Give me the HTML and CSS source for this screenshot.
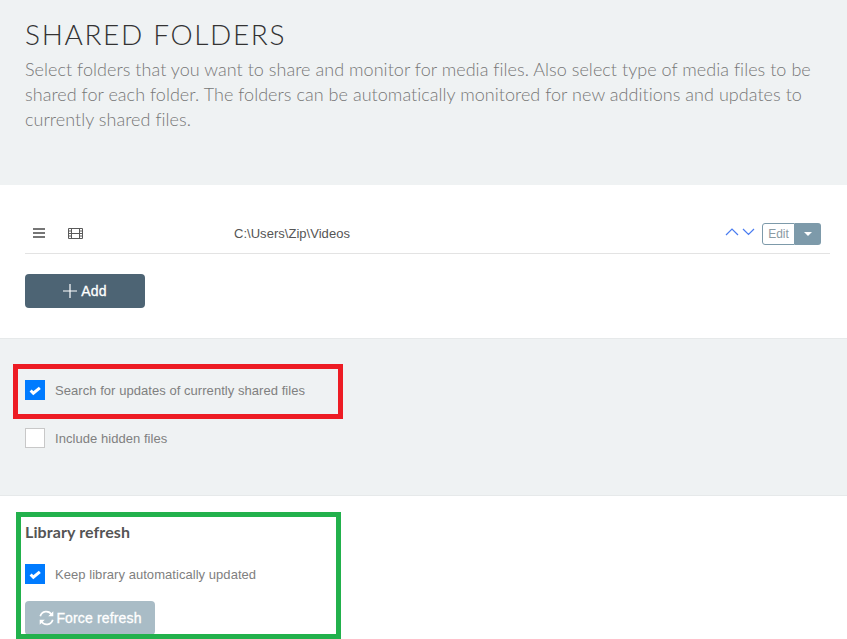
FILE: index.html
```html
<!DOCTYPE html>
<html lang="en">
<head>
<meta charset="utf-8">
<title>Shared folders</title>
<link rel="stylesheet" href="styles.css">
</head>
<body>
<header class="intro">
  <h1>SHARED FOLDERS</h1>
  <p>Select folders that you want to share and monitor for media files. Also select type of media files to be shared for each folder. The folders can be automatically monitored for new additions and updates to currently shared files.</p>
</header>
<section class="folders">
  <div class="row">
    <svg class="ic-menu" width="12" height="10" viewBox="0 0 12 10"><path d="M0 1h12M0 5h12M0 9h12" stroke="#4a4a4a" stroke-width="1.6"/></svg>
    <svg class="ic-film" width="15" height="13" viewBox="0 0 15 13"><path d="M.5 1.500h14v10H.5zM3.500 1.500v10M11.500 1.500v10M3.500 6.500h8M.5 4h3M.5 6.500h3M.5 9h3M11.500 4h3M11.500 6.500h3M11.500 9h3" fill="none" stroke="#5a5a5a"/></svg>
    <span class="path">C:\Users\Zip\Videos</span>
    <svg class="ic-arrows" width="30" height="9" viewBox="0 0 30 9"><path d="M1 8l6-6 6 6M18 2l5.500 5.500L29 2" fill="none" stroke="#4a7cf0" stroke-width="1.200"/></svg>
    <div class="edit-group">
      <span class="edit">Edit</span>
      <span class="caret"><i></i></span>
    </div>
  </div>
  <button class="btn add"><svg width="14" height="14" viewBox="0 0 14 14"><path d="M7 0v14M0 7h14" stroke="#fff" stroke-width="1.200"/></svg>Add</button>
</section>
<section class="options">
  <label class="check"><span class="box on"><svg width="13" height="11" viewBox="0 0 12 10"><path d="M1.500 5l2.500 2.500 6-5" fill="none" stroke="#fff" stroke-width="2.800"/></svg></span>Search for updates of currently shared files</label>
  <label class="check hidden-files"><span class="box"></span>Include hidden files</label>
</section>
<section class="refresh">
  <h2>Library refresh</h2>
  <label class="check"><span class="box on"><svg width="13" height="11" viewBox="0 0 12 10"><path d="M1.500 5l2.500 2.500 6-5" fill="none" stroke="#fff" stroke-width="2.800"/></svg></span>Keep library automatically updated</label>
  <button class="btn force"><svg width="17" height="16" viewBox="0 0 15 14"><path d="M2 5.500A5.500 5.500 0 0 1 12 4M13 8.500A5.500 5.500 0 0 1 3 10" fill="none" stroke="#fff" stroke-width="1.500"/><path d="M13.500 1v4.500H9zM1.500 13V8.500H6z" fill="#fff"/></svg>Force refresh</button>
</section>
<div class="mark mark-red"></div>
<div class="mark mark-green"></div>
</body>
</html>
```

FILE: styles.css
```css
html, body {
  margin: 0;
  padding: 0;
  height: 639px;
  overflow: hidden;
  background: #fff;
  font-family: "Liberation Sans", Arial, sans-serif;
}
.intro {
  box-sizing: border-box;
  height: 185px;
  padding: 16px 25px 0;
  background: #eff2f3;
  font-family: Lato, sans-serif;
}
.intro h1 {
  margin: 0;
  font-size: 28px;
  font-weight: 300;
  line-height: 36px;
  letter-spacing: 1.65px;
  color: #333;
}
.intro p {
  margin: 5px 0 0;
  font-size: 18px;
  font-weight: 300;
  line-height: 25px;
  letter-spacing: 0.04px;
  color: #777;
}
.folders {
  box-sizing: border-box;
  height: 153px;
  padding: 30px 17px 0 25px;
}
.row {
  display: flex;
  align-items: center;
  height: 39px;
  border-bottom: 1px solid #e3e3e3;
  box-sizing: border-box;
  padding: 0 9px 2px 0;
}
.ic-menu { margin-left: 8px; }
.ic-film { margin-left: 23px; }
.path {
  margin-left: 151px;
  font-size: 13px;
  letter-spacing: 0.03px;
  color: #555;
}
.ic-arrows { margin-left: auto; margin-right: 7px; margin-top: -3px; }
.edit-group { display: flex; height: 22px; margin-top: 2px; }
.edit {
  box-sizing: border-box;
  width: 33px;
  border: 1px solid #7d9aaa;
  border-radius: 3px 0 0 3px;
  font-size: 12px;
  line-height: 20px;
  text-align: center;
  color: #8a9aa3;
}
.caret {
  display: flex;
  align-items: center;
  justify-content: center;
  width: 26px;
  background: #7d9aaa;
  border-radius: 0 3px 3px 0;
}
.caret i {
  width: 0;
  height: 0;
  border: 4px solid transparent;
  border-top-color: #fff;
  border-bottom: 0;
}
.btn {
  display: flex;
  align-items: center;
  justify-content: center;
  border: 0;
  border-radius: 4px;
  padding: 0;
  font-family: "Liberation Sans", Arial, sans-serif;
  font-size: 14px;
  font-weight: 400;
  letter-spacing: 0.15px;
  -webkit-text-stroke: 0.3px #fff;
  color: #fff;
}
.add {
  gap: 4px;
  width: 120px;
  height: 34px;
  margin-top: 20px;
  background: #4d6474;
}
.options {
  box-sizing: border-box;
  height: 158px;
  padding: 41px 25px 0;
  background: #eff2f3;
  border-top: 1px solid #e6e9ea;
  border-bottom: 1px solid #e6e9ea;
}
.check {
  display: flex;
  align-items: center;
  gap: 10px;
  height: 20px;
  font-size: 13px;
  letter-spacing: 0.05px;
  color: #808080;
}
.hidden-files { margin-top: 28px; }
.box {
  box-sizing: border-box;
  flex: none;
  display: flex;
  align-items: center;
  justify-content: center;
  width: 20px;
  height: 20px;
  background: #fff;
  border: 1px solid #c8c8c8;
}
.box.on { background: #007bff; border-color: #007bff; }
.refresh {
  padding: 25px 25px 0;
}
.refresh h2 {
  margin: 0 0 21px;
  font-family: Lato, sans-serif;
  font-size: 16px;
  font-weight: 700;
  line-height: 22px;
  letter-spacing: 0.1px;
  color: #555;
}
.force {
  gap: 1px;
  width: 130px;
  height: 34px;
  margin-top: 17px;
  background: #a9bcc6;
}
.mark {
  position: absolute;
  box-sizing: border-box;
  border: 5px solid;
}
.mark-red {
  left: 13px;
  top: 364px;
  width: 330px;
  height: 55px;
  border-color: #ed1c24;
}
.mark-green {
  left: 16px;
  top: 512px;
  width: 325px;
  height: 127px;
  border-color: #22b14c;
}
```
